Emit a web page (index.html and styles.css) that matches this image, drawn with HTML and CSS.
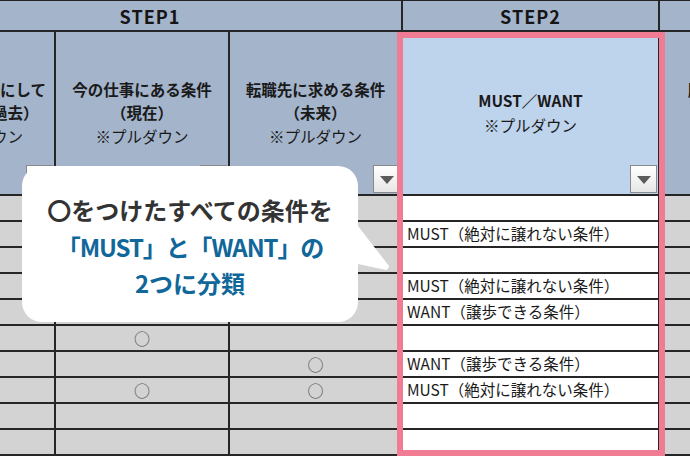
FILE: index.html
```html
<!DOCTYPE html>
<html lang="ja">
<head>
<meta charset="utf-8">
<link rel="stylesheet" href="styles.css">
</head>
<body>
<div class="wrap">
  <div class="sheet">
    <div class="cell step span3">STEP1</div>
    <div class="cell step">STEP2</div>
    <div class="cell step">STEP3</div>

    <div class="cell head">
      <div class="b">これまで大切にして</div>
      <div class="b">いた条件（過去）</div>
      <div>※プルダウン</div>
      <span class="dd"></span>
    </div>
    <div class="cell head">
      <div class="b">今の仕事にある条件</div>
      <div class="b">（現在）</div>
      <div>※プルダウン</div>
      <span class="dd"></span>
    </div>
    <div class="cell head">
      <div class="b">転職先に求める条件</div>
      <div class="b">（未来）</div>
      <div>※プルダウン</div>
      <span class="dd"></span>
    </div>
    <div class="cell head hl">
      <div class="b">MUST／WANT</div>
      <div>※プルダウン</div>
      <span class="dd"></span>
    </div>
    <div class="cell head">
      <div class="b">順位をつけた条件</div>
      <div class="b">（優先度）</div>
      <div>※プルダウン</div>
    </div>

    <!-- row 1 -->
    <div class="cell d"></div><div class="cell d"></div><div class="cell d"></div><div class="cell d w"></div><div class="cell d"></div>
    <!-- row 2 -->
    <div class="cell d"></div><div class="cell d"></div><div class="cell d"></div><div class="cell d w">MUST（絶対に譲れない条件）</div><div class="cell d"></div>
    <!-- row 3 -->
    <div class="cell d"></div><div class="cell d"></div><div class="cell d"></div><div class="cell d w"></div><div class="cell d"></div>
    <!-- row 4 -->
    <div class="cell d"></div><div class="cell d"></div><div class="cell d"></div><div class="cell d w">MUST（絶対に譲れない条件）</div><div class="cell d"></div>
    <!-- row 5 -->
    <div class="cell d"></div><div class="cell d"></div><div class="cell d"></div><div class="cell d w">WANT（譲歩できる条件）</div><div class="cell d"></div>
    <!-- row 6 -->
    <div class="cell d"></div><div class="cell d c">○</div><div class="cell d"></div><div class="cell d w"></div><div class="cell d"></div>
    <!-- row 7 -->
    <div class="cell d"></div><div class="cell d"></div><div class="cell d c">○</div><div class="cell d w">WANT（譲歩できる条件）</div><div class="cell d"></div>
    <!-- row 8 -->
    <div class="cell d"></div><div class="cell d c">○</div><div class="cell d c">○</div><div class="cell d w">MUST（絶対に譲れない条件）</div><div class="cell d"></div>
    <!-- row 9 -->
    <div class="cell d"></div><div class="cell d"></div><div class="cell d"></div><div class="cell d w"></div><div class="cell d"></div>
    <!-- row 10 -->
    <div class="cell d"></div><div class="cell d"></div><div class="cell d"></div><div class="cell d w"></div><div class="cell d"></div>
  </div>

  <div class="frame"></div>

  <svg class="tail" width="45" height="56" viewBox="0 0 45 56">
    <polygon points="0,6 8,6 39,46 38,49 36,50 8,44 0,44" fill="#fff"/>
  </svg>
  <div class="bubble">
    <div class="dark">〇をつけたすべての条件を</div>
    <div class="blue tight">「MUST」と「WANT」の</div>
    <div class="blue">2つに分類</div>
  </div>
</div>
</body>
</html>
```

FILE: styles.css
```css
* { box-sizing: border-box; }
html, body { margin: 0; padding: 0; }
body {
  font-family: "Noto Sans CJK JP", "Noto Sans", sans-serif;
  background: #d3d3d3;
  color: #111;
}
.wrap {
  position: relative;
  width: 690px;
  height: 456px;
  overflow: hidden;
}
.sheet {
  display: grid;
  grid-template-columns: 157px 174px 173px 257px 182px;
  grid-template-rows: 31px 164px repeat(10, 26px);
  margin-left: -101px;
  width: 943px;
  border-top: 1px solid #222;
}
.cell {
  position: relative;
  border-right: 2px solid #262626;
  border-bottom: 2px solid #262626;
  background: #d3d3d3;
  overflow: hidden;
}
.step {
  background: #a3b4cb;
  display: flex;
  align-items: center;
  justify-content: center;
  font-size: 18px;
  font-weight: 700;
  letter-spacing: 1px;
  color: #151515;
  padding-top: 1px;
}
.span3 { grid-column: span 3; }
.head {
  background: #a3b4cb;
  display: flex;
  flex-direction: column;
  align-items: center;
  justify-content: center;
  font-size: 15.5px;
  line-height: 23.5px;
  color: #1a1a1a;
  white-space: nowrap;
}
.head .b { font-weight: 700; }
.head.hl { background: #bed3ec; line-height: 25px; }
.dd {
  position: absolute;
  right: 1px;
  bottom: 1px;
  width: 27px;
  height: 28px;
  border: 1px solid #8a8a8a;
  background: linear-gradient(#ffffff, #e6e6e6);
}
.dd::after {
  content: "";
  position: absolute;
  left: 6px;
  top: 10px;
  border-left: 7px solid transparent;
  border-right: 7px solid transparent;
  border-top: 8px solid #5a5a5a;
}
.d {
  font-size: 15.5px;
  line-height: 22px;
  color: #1a1a1a;
  white-space: nowrap;
}
.d.w {
  background: #ffffff;
  padding-left: 4px;
}
.d.c {
  text-align: center;
  color: #4a4a4a;
  font-size: 16px;
  line-height: 24px;
}
.frame {
  position: absolute;
  left: 397px;
  top: 32px;
  width: 268px;
  height: 424px;
  border: 6px solid #f07c94;
}
.bubble {
  position: absolute;
  left: 22px;
  top: 166px;
  width: 336px;
  height: 156px;
  border-radius: 20px;
  background: #fff;
  display: flex;
  flex-direction: column;
  align-items: center;
  justify-content: center;
  padding-top: 6px;
  font-size: 24px;
  font-weight: 700;
  line-height: 36.5px;
  white-space: nowrap;
}
.bubble .dark { color: #333; }
.bubble .blue { color: #10679a; }
.bubble .tight { letter-spacing: -1.1px; }
.tail {
  position: absolute;
  left: 350px;
  top: 220px;
}
```
